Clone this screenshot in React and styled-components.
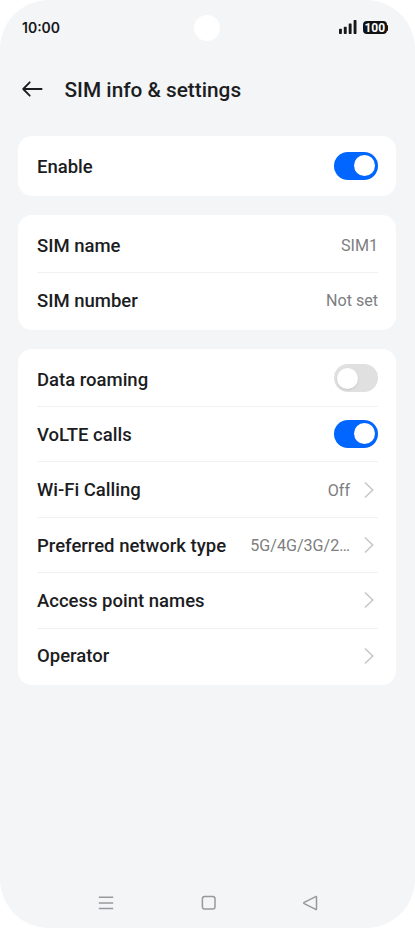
import React, { useState } from 'react';
import styled, { createGlobalStyle } from 'styled-components';

const GlobalStyle = createGlobalStyle`
  * {
    box-sizing: border-box;
  }

  body {
    margin: 0;
    background: #ffffff;
    font-family: Roboto, sans-serif;
  }
`;

function Toggle({ label, initial }) {
  const [on, setOn] = useState(initial);

  return (
    <Switch
      type="button"
      role="switch"
      aria-label={label}
      aria-checked={on}
      $on={on}
      onClick={() => setOn(!on)}
    >
      <Knob $on={on} />
    </Switch>
  );
}

function Chevron() {
  return (
    <ChevronIcon viewBox="0 0 10 18">
      <path d="M1 1.5 8.7 9 1 16.5" />
    </ChevronIcon>
  );
}

function Item({ label, value, link, children }) {
  return (
    <Row>
      <Label>{label}</Label>
      {value && <Value>{value}</Value>}
      {link && <Chevron />}
      {children}
    </Row>
  );
}

function App() {
  return (
    <>
      <GlobalStyle />
      <Phone>
        <StatusBar>
          <Time>10:00</Time>
          <Camera />
          <Indicators>
            <Signal viewBox="0 0 18 14">
              <rect x="0" y="8.8" width="2.9" height="5.2" rx="0.7" />
              <rect x="4.8" y="6.7" width="2.9" height="7.3" rx="0.7" />
              <rect x="9.7" y="3.4" width="2.9" height="10.6" rx="0.7" />
              <rect x="14.6" y="0" width="2.9" height="14" rx="0.7" />
            </Signal>
            <Battery>
              <Level>100</Level>
              <Tip />
            </Battery>
          </Indicators>
        </StatusBar>

        <Header>
          <BackIcon viewBox="0 0 22 16">
            <path d="M19.6 8H1.2M7.7 1.3 1.2 8l6.5 6.7" />
          </BackIcon>
          <Title>SIM info &amp; settings</Title>
        </Header>

        <Cards>
          <Card>
            <Item label="Enable">
              <Toggle label="Enable" initial />
            </Item>
          </Card>
          <Card>
            <Item label="SIM name" value="SIM1" />
            <Item label="SIM number" value="Not set" />
          </Card>
          <Card>
            <Item label="Data roaming">
              <Toggle label="Data roaming" initial={false} />
            </Item>
            <Item label="VoLTE calls">
              <Toggle label="VoLTE calls" initial />
            </Item>
            <Item label="Wi-Fi Calling" value="Off" link />
            <Item label="Preferred network type" value="5G/4G/3G/2…" link />
            <Item label="Access point names" link />
            <Item label="Operator" link />
          </Card>
        </Cards>

        <NavBar>
          <NavIcon viewBox="0 0 16 16">
            <path d="M.8 2.2h14.4M.8 7.9h14.4M.8 13.6h14.4" />
          </NavIcon>
          <NavIcon viewBox="0 0 16 16">
            <rect x="2.4" y="1.5" width="12.6" height="12.6" rx="2.3" />
          </NavIcon>
          <NavIcon viewBox="0 0 16 16">
            <path d="M14.5 2v12q0 .9-.8.4L2.2 8.6q-.9-.6 0-1.2L13.7 1.6q.8-.5.8.4Z" />
          </NavIcon>
        </NavBar>
      </Phone>
    </>
  );
}

const Phone = styled.div`
  width: 415px;
  height: 928px;
  background: #f3f5f7;
  border-radius: 49px;
  overflow: hidden;
  display: flex;
  flex-direction: column;
`;

const StatusBar = styled.div`
  height: 55px;
  padding: 0 27px 0 22px;
  display: grid;
  grid-template-columns: 1fr 26px 1fr;
  align-items: center;
`;

const Time = styled.span`
  color: #17181a;
  font-family: Inter, sans-serif;
  font-size: 14px;
  font-weight: 600;
  line-height: 18px;
`;

const Camera = styled.div`
  width: 26px;
  height: 26px;
  margin-left: 2.3px;
  background: #ffffff;
  border-radius: 50%;
`;

const Indicators = styled.div`
  padding-bottom: 1px;
  display: flex;
  justify-content: flex-end;
  align-items: flex-end;
  gap: 5.5px;
`;

const Signal = styled.svg`
  width: 18px;
  height: 14px;
  fill: #17181a;
`;

const Battery = styled.div`
  display: flex;
  align-items: center;
`;

const Level = styled.span`
  width: 24.5px;
  height: 13px;
  background: #111214;
  color: #ffffff;
  border-radius: 4px;
  font-size: 12px;
  font-weight: 700;
  line-height: 14px;
  text-align: center;
`;

const Tip = styled.span`
  width: 1px;
  height: 6px;
  background: #111214;
  border-radius: 0 1px 1px 0;
`;

const Header = styled.header`
  height: 81px;
  padding: 0 22px 13px;
  display: flex;
  align-items: center;
`;

const BackIcon = styled.svg`
  width: 22px;
  height: 16px;
  margin-right: 20.5px;
  fill: none;
  stroke: #1c1d1f;
  stroke-width: 1.8;
  stroke-linecap: round;
  stroke-linejoin: round;
`;

const Title = styled.h1`
  margin: 0;
  padding-top: 1px;
  color: #1c1d1f;
  font-size: 20.8px;
  font-weight: 500;
  line-height: 28px;
`;

const Cards = styled.main`
  flex: 1;
  padding: 0 18.6px 0 18.4px;
  display: flex;
  flex-direction: column;
  gap: 18.8px;
`;

const Card = styled.section`
  padding: 2px 18.4px 2.4px 18.6px;
  background: #ffffff;
  border-radius: 14px;
`;

const Row = styled.div`
  height: 55.4px;
  display: flex;
  align-items: center;

  & + & {
    box-shadow: inset 0 1px 0 #f0f1f2;
  }
`;

const Label = styled.span`
  flex: 1;
  padding-top: 2.6px;
  color: #1c1d1f;
  font-size: 18.5px;
  font-weight: 500;
  white-space: nowrap;
`;

const Value = styled.span`
  padding-top: 2px;
  color: #7d7e80;
  font-size: 16.1px;
  white-space: nowrap;
`;

const ChevronIcon = styled.svg`
  width: 10px;
  height: 18px;
  margin: 1px 4px 0 14px;
  fill: none;
  stroke: #c5c6c8;
  stroke-width: 1.5;
`;

const Switch = styled.button`
  width: 44px;
  height: 28px;
  padding: 3px;
  border: 0;
  border-radius: 14px;
  display: flex;
  align-items: center;
  justify-content: ${({ $on }) => ($on ? 'flex-end' : 'flex-start')};
  background: ${({ $on }) => ($on ? '#0066ff' : '#e0e0e0')};
`;

const Knob = styled.span`
  width: 21px;
  height: 21px;
  background: #ffffff;
  border-radius: 50%;
  box-shadow: ${({ $on }) => ($on ? 'none' : '0 1px 2px rgba(0, 0, 0, 0.12)')};
`;

const NavBar = styled.nav`
  height: 51px;
  padding: 0 97px 0 97.5px;
  display: flex;
  align-items: center;
  justify-content: space-between;
`;

const NavIcon = styled.svg`
  width: 16px;
  height: 16px;
  fill: none;
  stroke: #98999b;
  stroke-width: 1.5;
  stroke-linejoin: round;
`;

export default App;
